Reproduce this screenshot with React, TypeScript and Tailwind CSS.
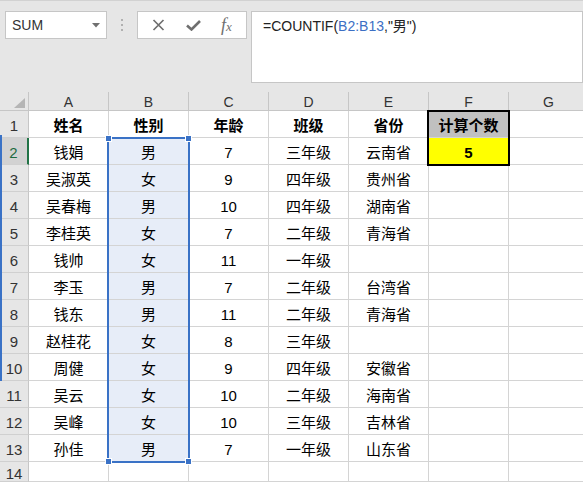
import React from 'react';

const cols = ['A', 'B', 'C', 'D', 'E', 'F', 'G'];

const rows: string[][] = [
  ['钱娟', '男', '7', '三年级', '云南省'],
  ['吴淑英', '女', '9', '四年级', '贵州省'],
  ['吴春梅', '男', '10', '四年级', '湖南省'],
  ['李桂英', '女', '7', '二年级', '青海省'],
  ['钱帅', '女', '11', '一年级', ''],
  ['李玉', '男', '7', '二年级', '台湾省'],
  ['钱东', '男', '11', '二年级', '青海省'],
  ['赵桂花', '女', '8', '三年级', ''],
  ['周健', '女', '9', '四年级', '安徽省'],
  ['吴云', '女', '10', '二年级', '海南省'],
  ['吴峰', '女', '10', '三年级', '吉林省'],
  ['孙佳', '男', '7', '一年级', '山东省'],
];

function Cell({ children, className = '' }: { children?: React.ReactNode; className?: string }) {
  return (
    <div
      className={`w-[80px] shrink-0 h-full flex items-center justify-center pt-[4px] border-r border-b border-[#d4d4d4] text-[15px] text-black ${className}`}
    >
      {children}
    </div>
  );
}

function RowHead({ n, active, className = '' }: { n: number; active?: boolean; className?: string }) {
  return (
    <div
      className={`w-[29px] shrink-0 h-full flex items-center justify-center pt-[5px] border-b border-[#d0d0d0] text-[15px] ${
        active ? 'bg-[#d2d2d2] text-[#1e6b3f] border-r-2 border-r-[#217346]' : 'bg-[#e6e6e6] text-[#333] border-r border-r-[#c6c6c6]'
      } ${className}`}
    >
      {n}
    </div>
  );
}

function Handle({ className }: { className: string }) {
  return <div className={`absolute w-[7px] h-[7px] bg-[#3a72c6] border border-white ${className}`} />;
}

export default function App() {
  return (
    <div className="w-[583px] h-[483px] overflow-hidden bg-white font-['Liberation_Sans','Noto_Sans_CJK_SC',sans-serif]">
      {/* formula bar */}
      <div className="h-[92px] bg-[#e6e6e6] border-t border-[#d2d2d2] flex items-start pt-[10px]">
        <div className="ml-[5px] w-[102px] h-[28px] shrink-0 bg-white border border-[#c6c6c6] flex items-center pl-[6px] pr-[6px] text-[14px] text-[#333]">
          <span className="flex-1">SUM</span>
          <svg width="8" height="5" viewBox="0 0 8 5">
            <path d="M0 0 L8 0 L4 4.5 Z" fill="#707070" />
          </svg>
        </div>
        <div className="w-[30px] shrink-0 h-[28px] flex flex-col items-center justify-center gap-[3px]">
          <div className="w-[2px] h-[2px] bg-[#b0b0b0]" />
          <div className="w-[2px] h-[2px] bg-[#b0b0b0]" />
          <div className="w-[2px] h-[2px] bg-[#b0b0b0]" />
        </div>
        <div className="w-[110px] h-[28px] shrink-0 bg-white border border-[#c6c6c6] flex items-center justify-around px-[4px]">
          <svg width="13" height="12" viewBox="0 0 13 12">
            <path d="M1.5 1 L11.5 11 M11.5 1 L1.5 11" stroke="#6f6f6f" strokeWidth="1.7" fill="none" />
          </svg>
          <svg width="15" height="11" viewBox="0 0 15 11">
            <path d="M1 5.5 L5.5 9.5 L14 1" stroke="#6f6f6f" strokeWidth="2.6" fill="none" />
          </svg>
          <span className="font-['Liberation_Serif',serif] italic text-[18px] text-[#6f6f6f] leading-none">
            f<span className="text-[13px]">x</span>
          </span>
        </div>
        <div className="ml-[4px] flex-1 h-[72px] bg-white border border-[#c6c6c6] pl-[11px] pt-[4px] text-[14px] text-[#222]">
          =COUNTIF(<span className="text-[#3c6fc4]">B2:B13</span>,"男")
        </div>
      </div>

      {/* grid */}
      <div className="relative">
        <div className="flex h-[19px] bg-[#e6e6e6] text-[14px] text-[#333]">
          <div className="w-[29px] shrink-0 h-full border-r border-b border-[#c6c6c6] flex items-end justify-end pr-[3px] pb-[2px]">
            <svg width="11" height="10" viewBox="0 0 11 10">
              <path d="M11 0 L11 10 L0 10 Z" fill="#b5b5b5" />
            </svg>
          </div>
          {cols.map((c) => (
            <div
              key={c}
              className="w-[80px] shrink-0 h-full flex items-center justify-center pt-[3px] border-r border-b border-[#c6c6c6]"
            >
              {c}
            </div>
          ))}
        </div>

        <div className="flex h-[27px]">
          <RowHead n={1} />
          {['姓名', '性别', '年龄', '班级', '省份'].map((h) => (
            <Cell key={h} className="font-bold">
              {h}
            </Cell>
          ))}
          <Cell className="font-bold bg-[#c0c0c0]">计算个数</Cell>
          <Cell />
        </div>

        {rows.map((r, i) => (
          <div key={i} className="flex h-[27px]">
            <RowHead n={i + 2} active={i === 0} />
            <Cell>{r[0]}</Cell>
            <Cell className="bg-[#e7edf8] border-[#cfd5de]">{r[1]}</Cell>
            <Cell>{r[2]}</Cell>
            <Cell>{r[3]}</Cell>
            <Cell>{r[4]}</Cell>
            {i === 0 ? <Cell className="font-bold bg-[#ffff00]">5</Cell> : <Cell />}
            <Cell />
          </div>
        ))}

        <div className="flex h-[20px]">
          <RowHead n={14} className="pt-[2px]" />
          {cols.map((c) => (
            <Cell key={c} />
          ))}
        </div>

        {/* B2:B13 selection */}
        <div className="absolute left-[107px] top-[45px] w-[83px] h-[326px] border-2 border-[#3a72c6]" />
        <Handle className="left-[105px] top-[43px]" />
        <Handle className="left-[185px] top-[43px]" />
        <Handle className="left-[105px] top-[366px]" />
        <Handle className="left-[185px] top-[366px]" />

        {/* F1:F2 outline */}
        <div className="absolute left-[427px] top-[18px] w-[83px] h-[56px] border-2 border-black" />

        {/* row header marker */}
        <div className="absolute left-0 top-[43px] w-[2px] h-[246px] bg-[#3a72c6]" />
      </div>
    </div>
  );
}
